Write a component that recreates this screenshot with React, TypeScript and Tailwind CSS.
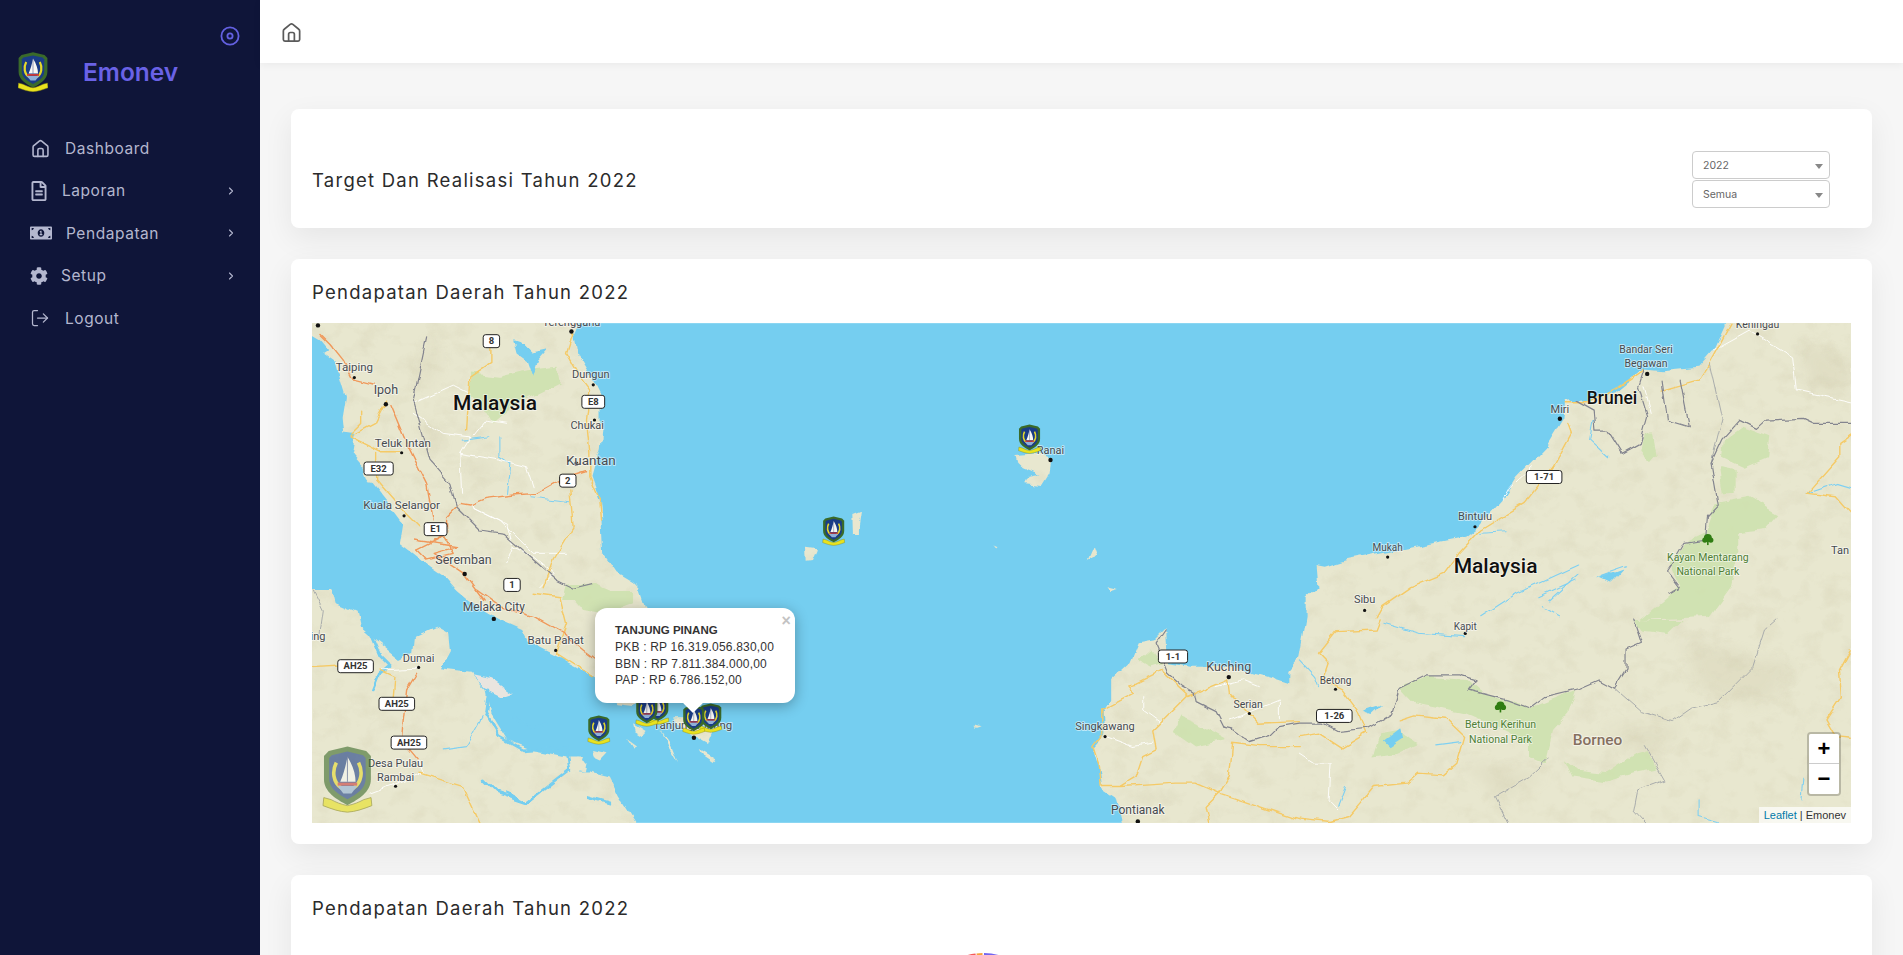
import React from "react";
import { ChevronRight, LogOut } from "lucide-react";
import { FaCog, FaMoneyBillAlt, FaRegFileAlt } from "react-icons/fa";

type Pt = [number, number];
const conv = (ox: number, oy: number, sx: number) => (s: string): Pt[] =>
  s.trim().split(/\s+/).map((p) => {
    const [x, y] = p.split(",").map(Number);
    return [ox + x / sx, oy + y / 3] as Pt;
  });
const z4 = conv(-12, -3, 3);
const z3 = conv(-12, 267, 3);
const z7 = conv(488, 77, 3);
const z5 = conv(988, -3, 2.755);
const z6 = conv(988, 297, 2.6);
const m = (x: number, y: number): Pt => [x * 1.2136 - 312, y * 1.2136 - 323];
const d = (pts: Pt[], close = false) =>
  "M" + pts.map((p) => p[0].toFixed(1) + " " + p[1].toFixed(1)).join("L") + (close ? "Z" : "");

const LAND = "#e8e7cf";
const WATER = "#75cef0";

const land: string[] = [
  d([...z4("0,-30 0,25 60,60 85,90 70,100 105,125 120,180 135,230 125,290 130,340 165,345 155,400 190,440 200,470 240,520 280,570 310,610 300,670 340,700 390,740 440,775 470,810"),
    ...z3("530,50 600,90 670,120 690,160 760,195 830,230 885,265 950,340 1000,345 1050,320 1040,60 1020,0"),
    ...z4("1000,790 950,760 910,700 905,600 900,540 875,470 900,380 905,320 905,230 885,190 860,150 830,100 820,40 850,-30")], true),
  d(z4("0,780 60,840 0,840"), true),
  d(z3("0,0 100,0 110,40 170,65 180,110 225,150 300,210 340,190 345,140 410,110 445,130 450,180 420,235 510,245 560,300 575,370 625,450 700,480 800,500 850,500 835,545 870,545 930,560 960,620 1030,730 0,730"), true),
  d(z3("880,480 920,490 900,512 885,505"), true),
  d(z3("830,500 860,520 855,545 825,540"), true),
  d(z3("982,448 1012,470 1000,476"), true),
  d(z3("1000,400 1040,425 1030,436 1005,420"), true),
  d(z3("1085,425 1115,470 1135,520 1105,470"), true),
  d(z3("1120,385 1170,385 1240,430 1225,465 1180,440 1130,398"), true),
  d(z3("1200,480 1250,510 1240,520 1210,500"), true),
  d(z7("645,165 700,160 755,180 750,215 725,255 680,250 690,230 720,225 670,205 650,185"), true),
  d(z7("22,440 55,445 40,480 24,482"), true),
  d(z7("158,345 184,335 178,375 178,405 160,405"), true),
  d(z7("880,435 890,465 862,476"), true),
  d(z7("582,435 594,438 588,444"), true),
  d(z7("918,562 952,570 930,576"), true),
  d(z7("522,980 540,985 525,990"), true),
  d([...z7("980,1320 970,1268 950,1190 905,1160 895,1090 880,1040 915,1000 910,940 935,900 935,840 990,790 1015,730 1070,720 1100,690 1105,790 1170,800 1300,800 1410,830 1470,850 1470,810 1500,775"),
    ...z5("20,890 20,830 50,800 45,735 70,740 130,720 460,650 490,625 560,540 600,470 680,380 725,300 730,245 800,240 870,215 950,145 1000,150 1100,140 1140,90 1190,-30 1620,-30"),
    [1570, 520] as Pt], true),
];

const parks: string[] = [
  d(z4("510,160 600,170 680,150 770,140 780,190 700,230 640,260 580,310 550,260 510,220"), true),
  d(z4("800,800 880,790 950,820 985,840 790,840"), true),
  d(z3("800,0 1000,0 1000,40 920,70 850,60"), true),
  d(z5("1220,320 1295,350 1290,410 1225,440 1165,410 1170,360"), true),
  d(z5("1160,440 1200,450 1200,520 1170,520"), true),
  d(z5("1150,550 1240,530 1320,580 1280,630 1210,640 1210,700 1190,800 1130,890 940,900 1050,800 1020,730 1060,670 1120,640"), true),
  d(z5("950,340 975,340 985,400 965,425 940,395"), true),
  d(z6("260,200 330,170 440,180 470,210 600,265 720,210 700,280 660,330 640,430 600,410 600,370 470,300 430,280 300,250"), true),
  d(z6("690,420 720,450 800,460 880,400 910,390 925,450 880,460 800,485 710,470"), true),
  d(z6("210,340 260,330 305,370 250,400 190,410"), true),
  d(z6("870,0 1000,0 960,45 890,35"), true),
  d(z7("1140,950 1190,970 1280,1020 1190,1040 1120,990"), true),
  d(z7("1015,780 1055,745 1085,790 1050,800"), true),
];

const yellow: Pt[][] = [
  z4("260,240 225,310 150,350 240,395 300,395"), z4("230,400 230,480 300,560 360,620"),
  z4("820,40 800,100 840,170 870,210 860,300 870,400 870,470 900,540 905,600"),
  z4("810,510 820,620 760,720 730,800"), z4("570,60 570,130 510,170 500,330"), z4("185,270 185,310 150,345"),
  z5("740,310 750,340 700,440 620,550 500,630 440,700 400,760 310,800 230,860 215,890"),
  z5("1000,210 1100,180 1130,130 1190,9"), z5("950,150 880,200 800,245 730,245"),
  z5("1543,330 1490,370 1490,410 1400,520 1480,530 1520,580 1543,625"),
  z6("50,100 95,35 200,30 210,0"), z6("50,100 75,130 60,180 110,210 150,270 175,340 110,385 50,340 0,350"),
  z6("260,300 300,285 380,295 430,350 410,430 375,465 310,460 280,490 195,500 160,550 130,590 80,605 0,595"),
  z6("1433,90 1405,150 1410,230 1370,300 1395,350 1433,355"),
  z7("1090,810 1010,850 985,855 1005,880 910,930 910,1000 880,1040 900,1100 905,1160 965,1160 1050,1155 1130,1150 1190,1150 1260,1180 1350,1210 1500,1260"),
  z7("1090,815 1165,885 1060,990 1070,1050 1030,1070 1010,1130 960,1160"),
  z7("1285,840 1290,880 1375,970 1500,965"), z7("1300,1030 1290,1130 1260,1180 1220,1220 1230,1268"),
  z7("1165,890 1285,840"), z7("1300,1030 1380,1040 1500,1040"),
  z3("700,10 780,20 800,100 770,190 880,260"), z3("540,700 490,590 360,550"), z3("40,230 120,225"), z3("240,240 285,260 280,320"),
];
const orange: Pt[][] = [
  z4("510,555 560,535 640,525 710,520 780,480 860,455"), z4("510,555 480,550 440,590 440,640 400,660"),
  z4("270,250 320,370 380,490 385,520 400,600"), z4("345,660 470,680 400,700 490,760 550,840"),
  z4("350,690 430,650 460,700 380,720 350,690"), z4("60,40 90,70 130,120 160,180 220,195"),
  z3("530,0 600,50 700,80 790,130 850,180 890,210"), z3("350,250 320,300 310,390 305,450 355,510"),
];
const white: Pt[][] = [
  z4("340,250 460,195 510,220"), z4("480,400 600,420 680,440 700,500"), z4("510,555 620,610 640,680 620,730"),
  z4("340,280 430,340 510,350 480,400 485,520"), z4("720,800 760,760 700,710"), z4("520,350 560,300 620,310"),
  z4("520,560 600,600 700,700 800,700"), z4("640,680 700,710"),
  z7("920,1010 1000,1040 1060,1030"), z7("1030,890 1030,930 1085,970"), z7("1290,960 1440,900 1440,960"), z7("1250,860 1330,840 1380,860"),
  z5("1140,90 1240,30 1360,110 1370,210 1543,250"), z5("560,540 580,500 640,440"), z5("950,200 970,280"),
  z6("0,400 40,430 80,430 75,540 100,570"), z3("240,240 355,235"), z3("355,510 370,550 210,610"),
];
const borders: Pt[][] = [
  z4("380,50 340,240 390,420 450,490 470,560 540,630 610,640 690,710 770,780 820,805 880,790"),
  z7("1100,690 1070,735 1105,820 1150,860 1185,880 1190,905 1250,935 1275,985 1300,990 1350,1025 1415,1005 1440,980 1500,970"),
  z6("0,310 60,310 100,335 180,325 240,285 260,205 330,165 420,165 460,180 440,210 540,240 600,265 640,230 730,205 780,180 820,205 850,150 850,90 890,70 870,0"),
  z5("1020,820 1050,800 1015,750 1030,725 1060,670 1120,660 1125,590 1155,555 1135,430 1165,360 1215,300 1260,325 1285,300 1390,295 1420,310 1543,310"),
  z5("760,240 810,270 815,330 850,330 890,400 940,370 960,290 935,200 950,150"),
  z5("1000,180 1015,300 1075,320 1050,180"),
];
const thinBorders: Pt[][] = [
  z6("820,205 890,275 970,305 1020,265 1090,245 1180,140 1210,30 1240,0"),
  z6("650,415 600,470 510,530 545,610"), z6("900,380 950,480 880,510 870,570 900,608"),
  z5("1130,130 1165,300 1135,430"), z3("40,0 70,60 60,130"),
];
const rivers: Pt[][] = [
  z3("570,300 560,370 600,440 670,480 800,470 810,540 680,640 620,610"),
  z3("640,380 700,420 740,400"), z3("210,130 240,200 270,230"), z3("220,300 240,250 270,225"),
  z3("550,570 590,610 680,640"), z3("860,620 930,640"),
];
const thinRivers: Pt[][] = [
  z4("490,360 570,350"), z4("600,350 600,410 630,430 620,520"), z4("690,530 810,545"),
  z5("810,300 800,360 850,410"), z5("500,640 570,635"), z5("500,890 600,820 770,735"), z5("820,770 900,740"),
  z5("1400,520 1480,490 1543,510"), z5("660,830 760,780"), z5("690,840 770,760"), z5("670,860 720,890"),
  z6("220,10 310,40 430,50"), z6("0,120 40,170 50,200"), z6("120,500 100,560"), z3("430,480 500,470 550,380"),
  z6("1040,540 1040,590 1090,605"), z6("1310,480 1305,540"), z6("355,375 420,365"),
];
const lakes: string[] = [
  d(z4("640,60 670,70 700,100 745,90 715,125 700,170 685,125 650,100"), true),
  d(z5("830,770 895,745 860,785"), true),
  d(z6("220,365 265,325 270,355 235,382"), true),
  d(z6("165,275 218,255 190,285"), true),
];
const hills: Pt[][] = [
  z4("380,60 420,90 400,180 360,200"), z4("360,290 430,350 400,400"), z4("520,420 570,430 560,480 510,470"),
  z5("1380,60 1530,130 1500,230 1400,200"), z6("1000,60 1290,140 1200,260 1040,200"), z6("800,320 1000,320 900,420"), z6("430,430 640,470 520,540"),
];

const labels: [string, number, number, number, string?][] = [
  ["Terengganu", 471, 265, 11], ["Taiping", 292, 302, 11.5], ["Ipoh", 318, 321, 12.5], ["Teluk Intan", 332, 365, 11.5],
  ["Kuala Selangor", 331, 416, 11.5], ["Seremban", 382, 461, 12.5], ["Melaka City", 407, 500, 12], ["Batu Pahat", 458, 527, 11.5],
  ["Dungun", 487, 308, 11], ["Chukai", 484, 350, 11], ["Kuantan", 487, 379, 13.5], ["Dumai", 345, 542, 11],
  ["Desa Pulau", 326, 629, 11], ["Rambai", 326, 640, 11], ["ing", 262, 524, 11], ["Ranai", 866, 371, 11],
  ["Tanjung Pinang", 571, 597, 11.5], ["Kuching", 1013, 549, 12.5], ["Serian", 1029, 580, 10.5], ["Singkawang", 911, 598, 11],
  ["Pontianak", 938, 667, 12], ["Betong", 1101, 561, 10], ["Sibu", 1125, 494, 11], ["Mukah", 1144, 451, 10],
  ["Bintulu", 1216, 425, 11], ["Kapit", 1208, 516, 10], ["Miri", 1286, 337, 11], ["Bandar Seri", 1357, 288, 10.5],
  ["Begawan", 1357, 299, 10.5], ["Keningau", 1449, 267, 10.5], ["Tan", 1517, 453, 11],
  ["Kayan Mentarang", 1408, 459, 10.5, "#4f7f35"], ["National Park", 1408, 471, 10.5, "#4f7f35"],
  ["Betung Kerihun", 1237, 597, 10.5, "#4f7f35"], ["National Park", 1237, 609, 10.5, "#4f7f35"],
];
const bigLabels: [string, number, number, number, string][] = [
  ["Malaysia", 408, 332, 21, "#111111"], ["Malaysia", 1233, 466, 21, "#111111"], ["Brunei", 1329, 328, 17.5, "#111111"], ["Borneo", 1317, 610, 15.5, "#85705f"],
];
const dots: [number, number, number][] = [
  [292, 311, 1.6], [318, 333, 2.2], [331, 373, 1.6], [333, 425, 1.6], [383, 473, 2.2], [407, 510, 2.2], [458, 536, 1.6],
  [489, 317, 1.6], [490, 346, 1.6], [471, 273, 2.2], [262, 268, 2.2], [475, 382, 2.2], [345, 550, 1.6], [326, 648, 1.6],
  [866, 379, 2.2], [572, 608, 2.2], [1013, 558, 2.2], [1030, 588, 1.6], [911, 607, 1.6], [938, 677, 2.2], [1101, 568, 1.6],
  [1125, 503, 1.6], [1144, 459, 1.6], [1216, 434, 1.6], [1208, 522, 1.6], [1286, 345, 2.2], [1358, 308, 2.2], [1449, 275, 1.6],
];
const shields: [string, number, number][] = [
  ["8", 405, 281], ["E8", 489, 331], ["E32", 312, 386], ["2", 468, 396], ["E1", 359, 436], ["1", 422, 482],
  ["AH25", 293, 549], ["AH25", 327, 580], ["AH25", 337, 612], ["1-1", 967, 541], ["1-26", 1100, 590], ["1-71", 1273, 393],
];
const markers: Pt[] = [[287, 407], [346, 387], [335, 389], [399, 395], [382, 397], [718, 116], [522, 208]];

function CrestShapes() {
  return (
    <>
      <path d="M15 0.3 L26.5 3 L29.4 6 L29.4 20 C29.4 27.5 22 32 15 35.5 C8 32 0.6 27.5 0.6 20 L0.6 6 L3.5 3 Z" fill="#3a6a2a" />
      <path d="M15 3.4 L24.6 5.6 L26.2 7.2 L26.2 19.6 C26.2 25.6 20.8 29 15 32 C9.2 29 3.8 25.6 3.8 19.6 L3.8 7.2 L5.4 5.6 Z" fill="#1a3c86" />
      <path d="M8.2 10 C5.5 15 6 22 11.5 25.4 M21.8 10 C24.5 15 24 22 18.5 25.4" fill="none" stroke="#e5d92c" strokeWidth="2.2" />
      <path d="M15 6.5 C18.5 12 20 17 20 21.5 L10.6 21.5 C12.6 17 14 12 15 6.5 Z" fill="#f8f8f4" />
      <path d="M15 6.5 L15 21.5" stroke="#2d3f80" strokeWidth="0.5" />
      <rect x="9" y="22" width="12" height="1.8" fill="#c93a3a" />
      <path d="M9 24 L21 24 L17.5 28.5 L12.5 28.5 Z" fill="#8fb0d8" />
      <path d="M0.5 31 L5 32.2 C8 33.8 11 35 15 35.8 C19 35 22 33.8 25 32.2 L29.5 31 L30 35.8 C24 38 20 39.4 15 39.7 C10 39.4 6 38 0 35.8 Z" fill="#e9e21e" stroke="#7d7c12" strokeWidth="0.5" />
    </>
  );
}

function Crest({ className }: { className: string }) {
  return (
    <svg viewBox="0 0 30 40" className={className}>
      <CrestShapes />
    </svg>
  );
}

function HomeIcon({ className }: { className: string }) {
  return (
    <svg viewBox="0 0 24 24" fill="none" stroke="currentColor" strokeWidth="1.8" strokeLinejoin="round" strokeLinecap="round" className={className}>
      <path d="M3.5 10.4 C3.5 9.7 3.8 9 4.4 8.6 L10.6 3.5 C11.4 2.9 12.6 2.9 13.4 3.5 L19.6 8.6 C20.2 9 20.5 9.7 20.5 10.4 V19.4 C20.5 20.3 19.8 21 18.9 21 H5.1 C4.2 21 3.5 20.3 3.5 19.4 Z" />
      <path d="M9 21 V13.8 C9 12.8 9.8 12 10.8 12 H13.2 C14.2 12 15 12.8 15 13.8 V21" />
    </svg>
  );
}

function TargetIcon({ className }: { className: string }) {
  return (
    <svg viewBox="0 0 20 20" fill="none" stroke="currentColor" className={className}>
      <circle cx="10" cy="10" r="8.6" strokeWidth="1.8" />
      <circle cx="10" cy="10" r="2.6" strokeWidth="1.8" />
    </svg>
  );
}

function WorldMap() {
  const strokes = (arr: Pt[][]) => arr.map((p) => d(p)).join(" ");
  return (
    <svg viewBox="0 0 1540 500" className="block h-full w-full">
      <defs>
        <filter id="rough" filterUnits="userSpaceOnUse" x="-20" y="-20" width="1580" height="540">
          <feTurbulence type="fractalNoise" baseFrequency="0.05" numOctaves="3" seed="4" result="n" />
          <feDisplacementMap in="SourceGraphic" in2="n" scale="9" xChannelSelector="R" yChannelSelector="G" />
        </filter>
        <filter id="wiggle" filterUnits="userSpaceOnUse" x="-20" y="-20" width="1580" height="540">
          <feTurbulence type="fractalNoise" baseFrequency="0.07" numOctaves="2" seed="9" result="n" />
          <feDisplacementMap in="SourceGraphic" in2="n" scale="6" xChannelSelector="R" yChannelSelector="G" />
        </filter>
        <filter id="terrain" filterUnits="userSpaceOnUse" x="0" y="0" width="1540" height="500">
          <feTurbulence type="fractalNoise" baseFrequency="0.045 0.06" numOctaves="4" seed="12" />
          <feColorMatrix type="matrix" values="0 0 0 0 0.62  0 0 0 0 0.58  0 0 0 0 0.4  2.4 0 0 0 -1.15" />
        </filter>
        <filter id="soft" filterUnits="userSpaceOnUse" x="0" y="0" width="1540" height="500">
          <feGaussianBlur stdDeviation="7" />
        </filter>
        <clipPath id="landClip">
          {land.map((p, i) => <path key={i} d={p} />)}
        </clipPath>
      </defs>
      <rect width="1540" height="500" fill={WATER} />
      <g filter="url(#rough)">
        <g fill={LAND}>
          {land.map((p, i) => <path key={i} d={p} />)}
        </g>
        <g clipPath="url(#landClip)">
          <rect width="1540" height="500" filter="url(#terrain)" opacity="0.26" />
          <g fill="#bfb795" opacity="0.18" filter="url(#soft)">
            {hills.map((p, i) => <path key={i} d={d(p, true)} />)}
          </g>
        </g>
        <g fill="#cfe2b0" opacity="0.92">
          {parks.map((p, i) => <path key={i} d={p} />)}
        </g>
        <path d={d(z3("515,250 570,262 640,310 610,320 560,295"), true)} fill="#e9e5df" />
        <path d={strokes(rivers)} fill="none" stroke={WATER} strokeWidth="2.8" strokeLinejoin="round" strokeLinecap="round" />
        <g fill={WATER}>
          {lakes.map((p, i) => <path key={i} d={p} />)}
        </g>
      </g>
      <g fill="none" strokeLinejoin="round" strokeLinecap="round" filter="url(#wiggle)">
        <path d={strokes(thinRivers)} stroke="#7fd0f2" strokeWidth="1.1" />
        <path d={strokes(thinBorders)} stroke="#a3a6a8" strokeWidth="0.9" />
        <path d={strokes(white)} stroke="#ffffff" strokeWidth="1" strokeOpacity="0.9" />
        <path d={strokes(yellow)} stroke="#f5ca66" strokeWidth="1.4" />
        <path d={strokes(orange)} stroke="#f0985a" strokeWidth="1.4" />
        <path d={strokes(borders)} stroke="#84858f" strokeWidth="1.2" />
      </g>
      <g fill="#111111">
        {dots.map(([x, y, r], i) => {
          const [a, b] = m(x, y);
          return <circle key={i} cx={a} cy={b} r={r} />;
        })}
      </g>
      <g fontFamily="Roboto, sans-serif" textAnchor="middle" paintOrder="stroke" stroke="rgba(255,255,255,0.55)" strokeWidth="1.8" strokeLinejoin="round">
        {labels.map(([t, x, y, s, c], i) => {
          const [a, b] = m(x, y);
          return (
            <text key={i} x={a} y={b + s * 0.36} fontSize={s} fill={c || "#474b50"}>
              {t}
            </text>
          );
        })}
        {bigLabels.map(([t, x, y, s, c], i) => {
          const [a, b] = m(x, y);
          return (
            <text key={i} x={a} y={b + s * 0.34} fontSize={s} fontWeight={500} fill={c}>
              {t}
            </text>
          );
        })}
      </g>
      {shields.map(([t, x, y], i) => {
        const [a, b] = m(x, y);
        const w = 10 + t.length * 6.4;
        return (
          <g key={i}>
            <rect x={a - w / 2} y={b - 6.5} width={w} height={13} rx="2.5" fill="#fff" stroke="#222" strokeWidth="1" />
            <text x={a} y={b + 3.3} fontSize="9.5" fontWeight={700} textAnchor="middle" fontFamily="Roboto, sans-serif" fill="#333">
              {t}
            </text>
          </g>
        );
      })}
      {([m(1408, 445), m(1237, 583)] as Pt[]).map(([a, b], i) => (
        <g key={i} fill="#2f7d12">
          <circle cx={a} cy={b - 2} r="4" />
          <circle cx={a - 3} cy={b} r="2.6" />
          <circle cx={a + 3} cy={b} r="2.6" />
          <rect x={a - 0.8} y={b} width="1.6" height="5" />
        </g>
      ))}
      {markers.map(([x, y], i) => (
        <g key={i} transform={`translate(${x - 11} ${y - 14.7}) scale(0.733)`}>
          <CrestShapes />
        </g>
      ))}
      <g transform="translate(11 423) scale(1.63 1.67)" opacity="0.6">
        <CrestShapes />
      </g>
    </svg>
  );
}

function NavItem({ icon, label, gap, chevron }: { icon: React.ReactNode; label: string; gap: string; chevron?: boolean }) {
  return (
    <div className="flex h-[42.5px] items-center pl-[30px] pr-[23px] text-[15.5px] tracking-[0.55px] text-[#b4b7cf]">
      <span className="flex items-center">{icon}</span>
      <span className={gap}>{label}</span>
      {chevron && <ChevronRight className="ml-auto h-[12px] w-[12px]" strokeWidth={2.2} />}
    </div>
  );
}

function Select({ label }: { label: string }) {
  return (
    <div className="flex h-[28px] w-[138px] items-center justify-between rounded-[4px] border border-[#cccccc] bg-white pl-[10px] pr-[6px] pt-[2px] text-[10.5px] text-[#666666]">
      <span>{label}</span>
      <span className="h-0 w-0 border-x-[4px] border-t-[5px] border-x-transparent border-t-[#888888]" />
    </div>
  );
}

const titleClass = "text-[18.5px] font-normal leading-[22px] tracking-[1.25px] text-[#2b2b2b]";
const cardShadow = "shadow-[0_10px_30px_rgba(0,0,0,0.07)]";

export default function App() {
  return (
    <div className="flex h-[955px] w-full overflow-hidden bg-[#f6f6f6] font-['Inter',sans-serif]">
      <aside className="h-full w-[260px] shrink-0 bg-[#0f1539]">
        <div className="flex justify-end pr-[20px] pt-[26px]">
          <TargetIcon className="h-[20px] w-[20px] text-[#6360e0]" />
        </div>
        <div className="mt-[6px] flex h-[40px] items-center pl-[18px]">
          <Crest className="h-[40px] w-[30px]" />
          <span className="ml-[35px] text-[24.5px] font-semibold leading-none text-[#6a62e6]">Emonev</span>
        </div>
        <nav className="mt-[35px]">
          <NavItem icon={<HomeIcon className="h-[21px] w-[21px]" />} label="Dashboard" gap="ml-[14px]" />
          <NavItem icon={<FaRegFileAlt className="h-[20px] w-[18px]" />} label="Laporan" gap="ml-[14px]" chevron />
          <NavItem icon={<FaMoneyBillAlt className="h-[20px] w-[22px]" />} label="Pendapatan" gap="ml-[14px]" chevron />
          <NavItem icon={<FaCog className="h-[18px] w-[18px]" />} label="Setup" gap="ml-[13px]" chevron />
          <NavItem icon={<LogOut className="h-[20px] w-[20px]" strokeWidth={1.5} />} label="Logout" gap="ml-[15px]" />
        </nav>
      </aside>
      <main className="min-w-0 flex-1">
        <header className="flex h-[63px] items-center bg-white pl-[20px] pt-[2px] shadow-[0_2px_8px_rgba(0,0,0,0.05)]">
          <HomeIcon className="h-[23px] w-[23px] text-[#5a5a5a]" />
        </header>
        <div className="flex flex-col gap-[31px] pl-[31px] pr-[31px] pt-[46px]">
          <section className={`flex h-[119px] items-center justify-between rounded-[8px] bg-white pb-[21px] pl-[21px] pr-[42px] pt-[43px] ${cardShadow}`}>
            <h2 className={titleClass}>Target Dan Realisasi Tahun 2022</h2>
            <div className="flex flex-col gap-px">
              <Select label="2022" />
              <Select label="Semua" />
            </div>
          </section>
          <section className={`rounded-[8px] bg-white px-[21px] pb-[21px] pt-[22px] ${cardShadow}`}>
            <h2 className={`mb-[20px] ${titleClass}`}>Pendapatan Daerah Tahun 2022</h2>
            <div className="relative h-[500px] w-full overflow-hidden">
              <WorldMap />
              <div className="absolute left-[283px] top-[285px] h-[95px] w-[200px] rounded-[12px] bg-white font-['Liberation_Sans',sans-serif] text-[12px] leading-[16.8px] tracking-[0.2px] text-[#333333] shadow-[0_3px_14px_rgba(0,0,0,0.3)]">
                <div className="pl-[20px] pt-[14px]">
                  <div className="text-[11.5px] font-bold tracking-normal">TANJUNG PINANG</div>
                  <div>PKB : RP 16.319.056.830,00</div>
                  <div>BBN : RP 7.811.384.000,00</div>
                  <div>PAP : RP 6.786.152,00</div>
                </div>
                <span className="absolute right-[4px] top-[3px] text-[16px] font-bold leading-[20px] text-[#c3c3c3]">×</span>
                <span className="absolute left-[91px] top-[88px] h-[14px] w-[14px] rotate-45 bg-white" />
              </div>
              <div className="absolute bottom-[27px] right-[10px] w-[34px] overflow-hidden rounded-[4px] border-2 border-[rgba(0,0,0,0.2)] bg-clip-padding font-['Liberation_Sans',sans-serif] text-[22px] font-bold leading-[30px] text-black">
                <div className="h-[30px] border-b border-[#cccccc] bg-white text-center">+</div>
                <div className="h-[30px] bg-white text-center">−</div>
              </div>
              <div className="absolute bottom-0 right-0 flex h-[16px] items-center bg-[rgba(255,255,255,0.7)] px-[5px] font-['Liberation_Sans',sans-serif] text-[11px] text-[#333333]">
                <span className="text-[#0078a8]">Leaflet</span>
                <span className="mx-[3px]">|</span>
                <span>Emonev</span>
              </div>
            </div>
          </section>
          <section className={`h-[400px] rounded-[8px] bg-white px-[21px] pt-[22px] ${cardShadow}`}>
            <h2 className={titleClass}>Pendapatan Daerah Tahun 2022</h2>
            <svg viewBox="0 0 120 120" className="ml-[611px] mt-[34px] h-[120px] w-[120px]">
              <path d="M60 60 L0 60 A60 60 0 0 1 52.5 0.5 Z" fill="#f45b5b" />
              <path d="M60 60 L53.5 0.4 A60 60 0 0 1 59.5 0 Z" fill="#f9a23c" />
              <path d="M60 60 L61 0 A60 60 0 0 1 120 60 Z" fill="#7466f0" />
            </svg>
          </section>
        </div>
      </main>
    </div>
  );
}
